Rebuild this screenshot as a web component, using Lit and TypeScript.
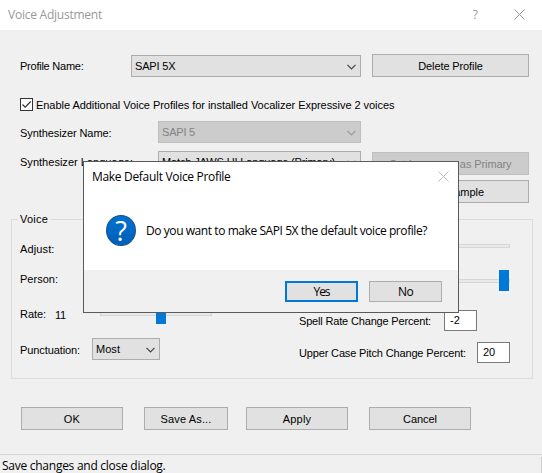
import { LitElement, html, css } from "lit";
import { customElement, property } from "lit/decorators.js";

/** A single line of text, tracked so that it fills exactly `w` pixels. */
@customElement("fit-text")
class FitText extends LitElement {
  @property() text = "";
  @property({ type: Number }) w = 0;
  static styles = css`
    :host { display: inline-block; white-space: nowrap; flex: none; }
  `;
  render() {
    return html`<span>${this.text}</span>`;
  }
  updated() {
    const span = this.renderRoot.querySelector("span")!;
    span.style.letterSpacing = "0";
    const natural = span.getBoundingClientRect().width;
    if (this.w && natural) span.style.letterSpacing = `${(this.w - natural) / this.text.length}px`;
  }
}

@customElement("combo-box")
class ComboBox extends LitElement {
  @property() value = "";
  @property({ type: Number }) w = 0;
  @property({ type: Boolean, reflect: true }) disabled = false;
  static styles = css`
    :host { display: flex; box-sizing: border-box; height: 22px; border: 1px solid #adadad; background: #e1e1e1;
      align-items: center; justify-content: space-between; padding: 0 4px 0 3px; line-height: 14px; }
    :host([disabled]) { background: #ccc; border-color: #bfbfbf; color: #838383; }
    svg { display: block; width: 9px; height: 6px; margin-top: 2px; fill: none; stroke: #444; stroke-width: 1.2; }
    :host([disabled]) svg { stroke: #999; }
  `;
  render() {
    return html`<fit-text .text=${this.value} .w=${this.w}></fit-text>
      <svg viewBox="0 0 9 6"><path d="M.5 .8 4.5 4.8 8.5 .8" /></svg>`;
  }
}

@customElement("push-button")
class PushButton extends LitElement {
  @property() label = "";
  @property({ type: Number }) w = 0;
  static styles = css`
    :host { display: flex; box-sizing: border-box; height: 23px; border: 1px solid #adadad; background: #e1e1e1;
      align-items: center; justify-content: center; line-height: 14px; }
    :host([disabled]) { background: #ccc; border-color: #bfbfbf; color: #838383; }
    :host([primary]) { border: 2px solid #0078d7; }
  `;
  render() {
    return html`<fit-text .text=${this.label} .w=${this.w}></fit-text>`;
  }
}

@customElement("app-root")
class AppRoot extends LitElement {
  static styles = css`
    :host { display: block; position: relative; width: 542px; height: 473px; overflow: hidden; background: #f0f0f0;
      color: #000; font: 11px/14px "Liberation Sans", Arial, sans-serif; }
    * { box-sizing: border-box; }

    .title { display: flex; height: 30px; background: #fff; align-items: center; justify-content: flex-end;
      padding: 0 17px 0 8px; color: #999; font: 12px/16px "Open Sans", "Noto Sans", sans-serif; }
    .name { margin-right: auto; }
    .help { margin-right: 36px; }
    .x { display: block; width: 11px; height: 11px; margin-top: -1px; fill: none; stroke: #999; stroke-width: 1; }

    .form { display: grid; height: 189px; padding: 24px 13px 0 20px; align-items: center;
      grid-template-columns: 111px 27px 203px 11px 157px;
      grid-template-rows: 23px 16px 23px 5px 23px 7px 24px 5px 23px; }
    .form > .lab { grid-column: 1 / 3; }
    .r1 { grid-row: 1; }
    .r2 { grid-row: 3; }
    .r3 { grid-row: 5; }
    .r4 { grid-row: 7; }
    .r5 { grid-row: 9; }
    .lab.r4 { margin-top: -3px; }
    .wide { grid-column: 2 / 4; align-self: end; }
    .mid { grid-column: 3; align-self: start; }
    .end { grid-column: 5; align-self: end; }
    .check { grid-column: 1 / 6; display: flex; align-items: center; gap: 3px; }
    .box { width: 13px; height: 13px; border: 1px solid #333; background: #fff; }
    .box svg { display: block; width: 11px; height: 11px; fill: none; stroke: #333; stroke-width: 1.2; }

    .group { display: grid; grid-template-columns: 287px 1fr; position: relative; width: 522px; height: 160px;
      margin-left: 11px; border: 1px solid #dcdcdc; }
    .legend { position: absolute; left: 6px; top: -8px; padding: 0 2px; background: #f0f0f0; }
    .left { padding: 22px 0 0 8px; display: grid; grid-template-rows: 30px 35px 32px 32px; }
    .line { display: flex; align-items: flex-start; }
    .right { display: grid; grid-template-rows: 24px 4px 22px 21px 19px 21px 11px 21px; width: 211px; }
    .track { height: 4px; border: 1px solid #d6d6d6; background: #e7eaea; }
    .slide { display: grid; align-items: center; }
    .slide > * { grid-area: 1 / 1; }
    .thumb { width: 10px; height: 21px; background: #0078d7; }
    .t1 { grid-row: 2; }
    .t2 { grid-row: 4; }
    .high { justify-self: end; margin-right: 1px; }
    .num { margin-left: 9px; padding-top: 1px; }
    .rate .slide { width: 112px; margin: -4px 0 0 34px; }
    .rate .track { margin-top: 1px; }
    .rate .thumb { margin-left: 56px; }
    .punct { padding-top: 4px; }
    .most { width: 68px; margin: -5px 0 0 12px; }
    .field { display: flex; justify-content: space-between; align-items: center; }
    .edit { width: 33px; height: 21px; border: 1px solid #7a7a7a; background: #fff; padding: 2px 5px; }
    .f1 { grid-row: 6; padding-right: 33px; }
    .f2 { grid-row: 8; }

    .actions { display: flex; height: 47px; margin-top: 28px; padding-left: 21px; }
    .b1 { width: 102px; }
    .b2 { width: 84px; margin-left: 21px; }
    .b3 { width: 102px; margin-left: 18px; }
    .b4 { width: 102px; margin-left: 21px; }
    .status { display: flex; height: 19px; border-top: 1px solid #d7d7d7; padding: 2px 0 0 2px;
      justify-content: space-between; font: 12px/17px "Open Sans", "Noto Sans", sans-serif; }
    .grip { width: 1px; background: #d0d0d0; }

    .dialog { position: absolute; left: 83px; top: 161px; width: 376px; height: 152px; border: 1px solid #5a5a5a;
      background: #fff; display: flex; flex-direction: column;
      font: 12px/16px "Open Sans", "Noto Sans", sans-serif; }
    .dtitle { display: flex; height: 30px; align-items: center; justify-content: space-between; padding: 0 9px 0 8px; }
    .dtitle .x { stroke: #bbb; margin-top: -2px; }
    .body { display: flex; flex: 1; padding: 23px 0 0 22px; gap: 10px; }
    .icon { display: flex; width: 30px; height: 31px; border: 1px solid #12518d; border-radius: 50%;
      background: linear-gradient(#0072d0, #005fb8); color: #fff; align-items: center; justify-content: center;
      font-size: 27px; line-height: 29px; }
    .msg { padding-top: 8px; }
    .foot { display: flex; height: 42px; background: #f0f0f0; padding: 11px 16px 0 0; gap: 11px; justify-content: flex-end; }
    .foot push-button { width: 73px; height: 21px; }
  `;

  render() {
    const cross = html`<svg class="x" viewBox="0 0 11 11"><path d="M.5 .5 10.5 10.5M10.5 .5 .5 10.5" /></svg>`;
    return html`
      <div class="title"><fit-text class="name" text="Voice Adjustment" w="94"></fit-text><span class="help">?</span>${cross}</div>
      <div class="form">
        <fit-text class="lab r1" text="Profile Name:" w="63.5"></fit-text>
        <combo-box class="wide r1" value="SAPI 5X" w="40.5"></combo-box>
        <push-button class="end r1" label="Delete Profile" w="64.5"></push-button>
        <div class="check r2">
          <div class="box"><svg viewBox="0 0 11 11"><path d="M1.5 5.5 4.2 8.2 9.7 2.5" /></svg></div>
          <fit-text text="Enable Additional Voice Profiles for installed Vocalizer Expressive 2 voices" w="358.5"></fit-text>
        </div>
        <fit-text class="lab r3" text="Synthesizer Name:" w="91.5"></fit-text>
        <combo-box class="mid r3" value="SAPI 5" w="33" disabled></combo-box>
        <fit-text class="lab r4" text="Synthesizer Language:" w="113"></fit-text>
        <combo-box class="mid r4" value="Match JAWS UI Language (Primary)" w="173"></combo-box>
        <push-button class="end r4" label="Set Language as Primary" w="122" disabled></push-button>
        <push-button class="end r5" label="Voice Sample" w="67"></push-button>
      </div>
      <div class="group">
        <fit-text class="legend" text="Voice" w="28"></fit-text>
        <div class="left">
          <div class="line"><fit-text text="Adjust:" w="34.5"></fit-text></div>
          <div class="line"><fit-text text="Person:" w="38"></fit-text></div>
          <div class="line rate"><fit-text text="Rate:" w="26"></fit-text><fit-text class="num" text="11" w="11"></fit-text>
            <div class="slide"><div class="track"></div><div class="thumb"></div></div></div>
          <div class="line punct"><fit-text text="Punctuation:" w="60"></fit-text><combo-box class="most" value="Most" w="24"></combo-box></div>
        </div>
        <div class="right">
          <div class="track t1"></div>
          <div class="slide t2"><div class="track"></div><div class="thumb high"></div></div>
          <div class="field f1"><fit-text text="Spell Rate Change Percent:" w="132"></fit-text><div class="edit">-2</div></div>
          <div class="field f2"><fit-text text="Upper Case Pitch Change Percent:" w="167"></fit-text><div class="edit">20</div></div>
        </div>
      </div>
      <div class="actions">
        <push-button class="b1" label="OK" w="16.5"></push-button>
        <push-button class="b2" label="Save As..." w="51"></push-button>
        <push-button class="b3" label="Apply" w="28.5"></push-button>
        <push-button class="b4" label="Cancel" w="34"></push-button>
      </div>
      <div class="status"><fit-text text="Save changes and close dialog." w="163.5"></fit-text><div class="grip"></div></div>
      <div class="dialog">
        <div class="dtitle"><fit-text text="Make Default Voice Profile" w="138.5"></fit-text>${cross}</div>
        <div class="body">
          <div class="icon">?</div>
          <fit-text class="msg" text="Do you want to make SAPI 5X the default voice profile?" w="281"></fit-text>
        </div>
        <div class="foot"><push-button primary label="Yes" w="16"></push-button><push-button label="No" w="15"></push-button></div>
      </div>
    `;
  }
}
